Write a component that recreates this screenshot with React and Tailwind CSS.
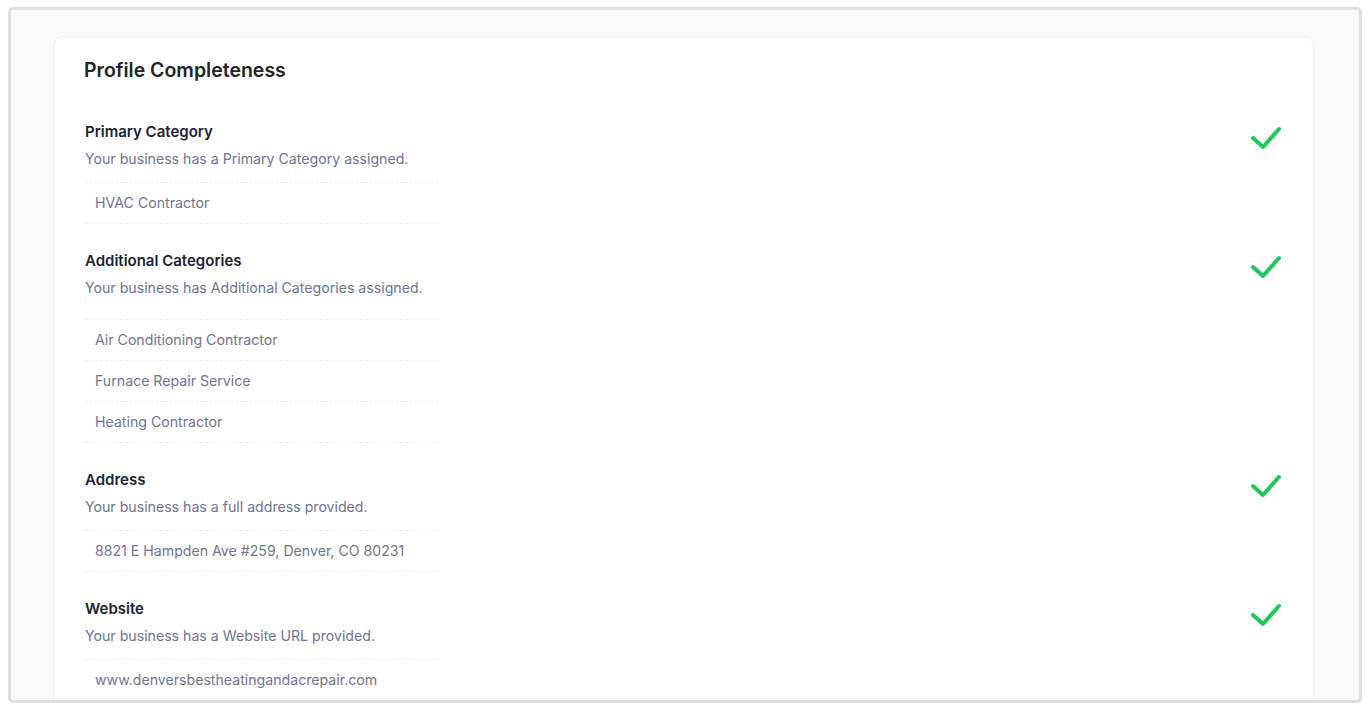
import React from 'react';

const sections = [
  {
    title: 'Primary Category',
    desc: 'Your business has a Primary Category assigned.',
    items: ['HVAC Contractor'],
  },
  {
    title: 'Additional Categories',
    desc: 'Your business has Additional Categories assigned.',
    items: ['Air Conditioning Contractor', 'Furnace Repair Service', 'Heating Contractor'],
    wide: true,
  },
  {
    title: 'Address',
    desc: 'Your business has a full address provided.',
    items: ['8821 E Hampden Ave #259, Denver, CO 80231'],
  },
  {
    title: 'Website',
    desc: 'Your business has a Website URL provided.',
    items: ['www.denversbestheatingandacrepair.com'],
  },
];

const CheckMark = () => (
  <svg width="34" height="26" viewBox="0 0 34 26" fill="none" className="mt-[3px] shrink-0">
    <path
      d="M4 13 L14 22 L30 4"
      stroke="#22c55e"
      strokeWidth="4"
      strokeLinecap="round"
      strokeLinejoin="round"
    />
  </svg>
);

const Section = ({ title, desc, items, wide }) => (
  <div className="flex items-start justify-between">
    <div className="w-[353px]">
      <div className="text-[15px] leading-5 font-semibold text-[#1c2333]">{title}</div>
      <div className="mt-[7px] text-[14.15px] leading-5 text-[#6f7592]">{desc}</div>
      <div className={`${wide ? 'mt-[21px]' : 'mt-[13px]'} border-b border-dashed border-[#ececec]`}>
        {items.map((item) => (
          <div
            key={item}
            className="border-t border-dashed border-[#ececec] pl-[10px] py-[10px] text-[14.15px] leading-5 text-[#717690]"
          >
            {item}
          </div>
        ))}
      </div>
    </div>
    <CheckMark />
  </div>
);

export default function App() {
  return (
    <div className="bg-white w-[1370px] h-[710px] pt-[7px] pl-[8px]" style={{ fontFamily: 'Inter, "Noto Sans", sans-serif' }}>
      <div className="w-[1354px] h-[696px] border-[3px] border-[#e0e0e0] rounded-[5px] bg-[#fafafa] overflow-hidden pt-[26px] pl-[42px] pr-[45px]">
        <div className="bg-white border border-[#efefef] rounded-[10px] px-[30px] pt-[19px] pb-[30px]">
          <h2 className="text-[19.5px] leading-7 font-semibold text-[#242424]">Profile Completeness</h2>
          <div className="mt-[38px] pl-px flex flex-col gap-[27px]">
            {sections.map((s) => (
              <Section key={s.title} {...s} />
            ))}
          </div>
        </div>
      </div>
    </div>
  );
}
